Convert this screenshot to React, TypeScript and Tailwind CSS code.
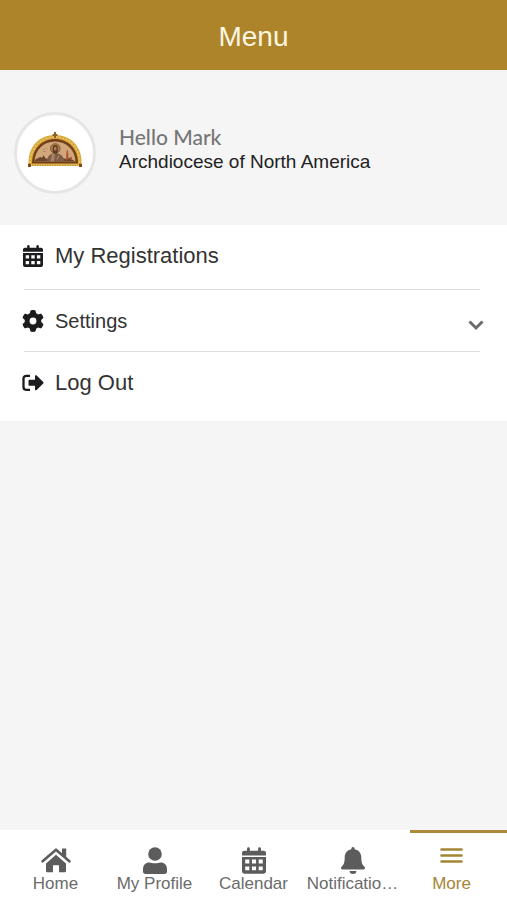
import type { ReactNode } from 'react';
import { FaGear } from 'react-icons/fa6';

interface Tab {
  label: string;
  icon: ReactNode;
  active?: boolean;
}

function HomeIcon() {
  return (
    <svg viewBox="0 0 30 26" className="h-[26px] w-[30px]" fill="currentColor" aria-hidden="true">
      <path d="M5 16.500 15 7.800l10 8.700V24a1.200 1.200 0 0 1-1.200 1.200H18v-7h-6v7H6.200A1.200 1.200 0 0 1 5 24Z" />
      <path d="M21 1.500h4.200v9L21 7Z" />
      <path d="M1.600 14.300 15 2.700l13.400 11.600" fill="none" stroke="currentColor" strokeWidth="2.600" strokeLinecap="round" strokeLinejoin="round" />
    </svg>
  );
}

function UserIcon() {
  return (
    <svg viewBox="0 0 24 27" className="h-[27px] w-6" fill="currentColor" aria-hidden="true">
      <circle cx="12" cy="7" r="6.800" />
      <path d="M0 24.500V22c0-4 2.600-6.600 6.400-6.600 1.900 0 3 .9 5.600.9s3.700-.9 5.600-.9C21.400 15.400 24 18 24 22v2.500c0 1.500-.9 2.500-2.400 2.500H2.400C.9 27 0 26 0 24.500Z" />
    </svg>
  );
}

function CalendarIcon({ className }: { className: string }) {
  return (
    <svg viewBox="0 0 20 22" className={className} fill="currentColor" aria-hidden="true">
      <path d="M4.200 1.200a1.200 1.200 0 0 1 2.400 0v1.600h6.800V1.200a1.200 1.200 0 0 1 2.400 0v1.600H18a2 2 0 0 1 2 2v2H0v-2a2 2 0 0 1 2-2h2.200Z" />
      <path
        fillRule="evenodd"
        d="M0 8h20v12a2 2 0 0 1-2 2H2a2 2 0 0 1-2-2ZM2.700 10.200h3.400v3.300H2.700ZM8.300 10.200h3.400v3.300H8.300ZM13.900 10.200h3.400v3.300h-3.400ZM2.700 15.900h3.400v3.300H2.700ZM8.300 15.900h3.400v3.300H8.300ZM13.900 15.900h3.400v3.300h-3.400Z"
      />
    </svg>
  );
}

function BellIcon() {
  return (
    <svg viewBox="0 0 24 27" className="h-[27px] w-6" fill="currentColor" aria-hidden="true">
      <path d="M12 0a1.700 1.700 0 0 1 1.700 1.700v.6c4 .8 6.600 4 6.600 8.200 0 5 1 7.200 2.900 9 .6.600.8 1 .8 1.500 0 .8-.6 1.400-1.500 1.400h-21C.6 22.400 0 21.800 0 21c0-.5.2-.9.800-1.500 1.900-1.800 2.900-4 2.900-9 0-4.200 2.600-7.400 6.600-8.200v-.6A1.700 1.700 0 0 1 12 0Z" />
      <path d="M8.600 24h6.800a3.400 3 0 0 1-6.800 0Z" />
    </svg>
  );
}

function LogOutIcon() {
  return (
    <svg viewBox="0 0 22 18" className="h-[18px] w-[22px]" fill="currentColor" aria-hidden="true">
      <path d="M8 1.800H4.200A2.700 2.700 0 0 0 1.500 4.500v8.600a2.700 2.700 0 0 0 2.700 2.700H8" fill="none" stroke="currentColor" strokeWidth="2.300" />
      <path d="M6.500 6.800c0-.6.400-1 1-1H13V2.300c0-1 1-1.400 1.700-.7l6.500 6.300c.5.500.5 1.200 0 1.700L14.700 16c-.7.700-1.700.2-1.700-.7v-3.500H7.500c-.6 0-1-.4-1-1Z" />
    </svg>
  );
}

function MenuIcon() {
  return (
    <svg viewBox="0 0 23 18" className="h-[18px] w-[23px]" stroke="currentColor" strokeWidth="2.600" strokeLinecap="round" aria-hidden="true">
      <path d="M1.500 2.500h20M1.500 8.500h20M1.500 14.500h20" />
    </svg>
  );
}

function ChevronIcon() {
  return (
    <svg viewBox="0 0 16 12" className="mt-2 h-3 w-4" fill="none" stroke="#6b6b6b" strokeWidth="3" aria-hidden="true">
      <path d="M1.500 2.500 8 9l6.500-6.500" />
    </svg>
  );
}

// Half-round icon of Christ in a gold mosaic frame
function ArchLogo() {
  return (
    <svg viewBox="0 0 54 35" className="h-[35px] w-[54px]" role="img" aria-label="Archdiocese">
      <path d="M.5 34V30C.5 14 12 3 27 3s26.500 11 26.500 27v4Z" fill="#d8a83a" />
      <path d="M2.300 31C2.300 15.500 13 5 27 5s24.700 10.500 24.700 26" fill="none" stroke="#eecb70" strokeWidth="1.400" strokeDasharray="1.800 1.600" />
      <path d="M4 31.500C4 16.500 14 7 27 7s23 9.500 23 24.500Z" fill="#74401a" />
      <path d="M6.500 29.500C7 18 15.500 9.500 27 9.500s20 8.500 20.500 20Z" fill="#d0a67a" />
      <path d="M6.500 29.500c.5-2 2-3 3.500-3.200l2-1.300 2 .8 1.500-2.600 2 3 4 1.600h12l2-1.600 3 .8 3-1.300 3 2 3 1.800Z" fill="#6b452b" />
      <path d="M18.500 29.500c.6-4.500 3-7 5.800-8h6c3 1 5.600 3.500 6.400 8Z" fill="#7d5c47" />
      <path d="M24 21.500h3l-1 8h-3.500Z" fill="#a98263" />
      <circle cx="27.300" cy="16.500" r="4.800" fill="#ab7b48" stroke="#77502c" strokeWidth=".8" />
      <path d="M24.800 20v-4c0-2 1-3 2.500-3s2.500 1 2.500 3v4l-1.200 1.800h-2.600Z" fill="#5e3c28" />
      <ellipse cx="27.300" cy="16.800" rx="1.300" ry="2" fill="#b28058" />
      <path d="m31 23.500-2 4" stroke="#b28e72" />
      <path d="M38.600 28v-6l.7-4 .7 4v6Z" fill="#a9512f" stroke="#a9512f" strokeWidth=".6" />
      <path d="M42 28v-2.500l1-1 1 1V28Z" fill="#a05a38" />
      <path d="M14.500 17.500H17M18 16.500h1.500M15 19.500h3" stroke="#b08658" strokeWidth=".8" />
      <path d="M1 33h52" stroke="#e6bf5a" strokeWidth="2" />
      <path d="M4 33.200h46" stroke="#a87724" strokeWidth=".9" strokeDasharray="1.500 1" />
      <path d="M0 31.800h3V35H0ZM51 31.800h3V35h-3Z" fill="#7d491d" />
      <path d="M27 0v6M24.500 3h5" stroke="#8b6226" strokeWidth="2" />
    </svg>
  );
}

const TABS: Tab[] = [
  { label: 'Home', icon: <HomeIcon /> },
  { label: 'My Profile', icon: <UserIcon /> },
  { label: 'Calendar', icon: <CalendarIcon className="h-[27px] w-6" /> },
  { label: 'Notificatio…', icon: <BellIcon /> },
  { label: 'More', icon: <MenuIcon />, active: true },
];

function MenuRow({ icon, label, labelClass, trailing }: { icon: ReactNode; label: string; labelClass: string; trailing?: ReactNode }) {
  return (
    <button type="button" className="flex h-[61px] w-full items-center pr-[23px] pl-[22px] text-left">
      <span className="flex w-[22px] shrink-0 justify-center text-[#1c1c1e]">{icon}</span>
      <span className={`ml-[11px] flex-1 ${labelClass}`}>{label}</span>
      {trailing}
    </button>
  );
}

export default function App() {
  return (
    <div className="flex min-h-screen flex-col bg-[#f5f5f5] font-['Liberation_Sans',Arial,sans-serif] text-[#333]">
      <header className="flex h-[70px] items-center justify-center bg-[#ae842a] pt-1">
        <h1 className="text-[28px] leading-8 text-[#fdf6e3]">Menu</h1>
      </header>

      <main className="flex-1">
        {/* Profile */}
        <section className="flex items-center px-[14px] pt-[42px] pb-[31px]">
          <div className="flex size-[82px] shrink-0 items-center justify-center rounded-full border-3 border-[#e6e6e6] bg-white pb-2">
            <ArchLogo />
          </div>
          <div className="ml-[23px] pb-2">
            <p className="font-[Lato,sans-serif] text-[21px] leading-[26px] font-medium text-[#757575]">Hello Mark</p>
            <p className="text-[19px] leading-6 text-[#222]">Archdiocese of North America</p>
          </div>
        </section>

        {/* Menu */}
        <ul className="bg-white pb-2">
          <li className="pb-[3px]">
            <MenuRow icon={<CalendarIcon className="h-[22px] w-5" />} label="My Registrations" labelClass="text-[22px]" />
          </li>
          <li>
            <hr className="mr-[27px] ml-6 border-[#dedede]" />
            <MenuRow icon={<FaGear className="size-[22px]" />} label="Settings" labelClass="text-[20px]" trailing={<ChevronIcon />} />
          </li>
          <li>
            <hr className="mr-[27px] ml-6 border-[#dedede]" />
            <MenuRow icon={<LogOutIcon />} label="Log Out" labelClass="text-[22px]" />
          </li>
        </ul>
      </main>

      <nav className="grid h-[70px] grid-cols-5 bg-white px-[6px]">
        {TABS.map((tab) => (
          <a
            key={tab.label}
            href="#"
            aria-current={tab.active ? 'page' : undefined}
            className={`relative flex flex-col items-center pt-[17px] ${tab.active ? 'text-[#a48536]' : 'text-[#5c5c5c]'}`}
          >
            {tab.active && <span className="absolute top-0 -right-[6px] left-2 h-[3px] bg-[#ae8a3c]" />}
            <span className="flex h-[27px] items-start">{tab.icon}</span>
            <span className={`text-[17px] leading-5 whitespace-nowrap ${tab.active ? '' : 'text-[#6b6b6b]'}`}>{tab.label}</span>
          </a>
        ))}
      </nav>
    </div>
  );
}
